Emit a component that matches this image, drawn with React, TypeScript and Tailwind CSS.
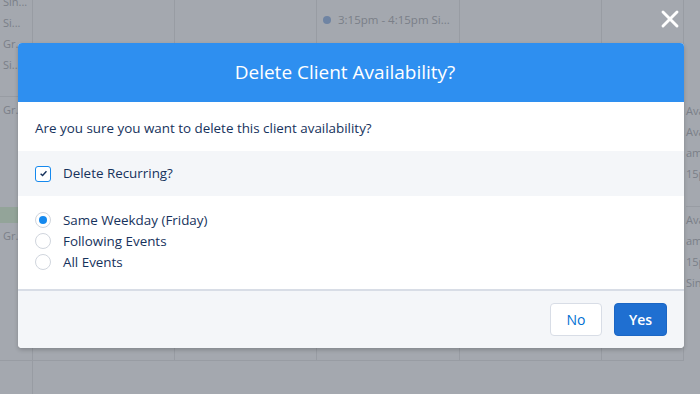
import { X } from "lucide-react";

function CalendarBackdrop() {
  return (
    <div className="flex h-full w-full text-[11px] text-[#7a7f88]">
      {/* first narrow column */}
      <div className="flex w-[33px] flex-col overflow-hidden whitespace-nowrap border-r border-[#989ca3]">
        <div className="flex h-[97px] flex-col gap-[5px] border-b border-[#989ca3] pl-[3px] pt-[2px] leading-[16px]">
          <span className="-mt-[8px]">Sin...</span>
          <span>Si...</span>
          <span>Gr...</span>
          <span>Si...</span>
        </div>
        <div className="flex h-[110px] flex-col pl-[3px] pt-[5px] leading-[16px]">
          <span>Gr...</span>
        </div>
        <div className="h-[16px] bg-[#93a499]" />
        <div className="flex h-[138px] flex-col border-b border-[#989ca3] pl-[3px] pt-[5px] leading-[16px]">
          <span>Gr...</span>
        </div>
      </div>
      <div className="h-[361px] w-[142px] border-r border-b border-[#989ca3]" />
      <div className="h-[361px] w-[142px] border-r border-b border-[#989ca3]" />
      <div className="flex h-[361px] w-[143px] flex-col border-r border-b border-[#989ca3] pl-[6px] pt-[13px]">
        <div className="flex items-center gap-[7px] text-[11.5px] leading-[14px]">
          <span className="h-[8px] w-[8px] rounded-full bg-[#6f84a3]" />
          <span>3:15pm - 4:15pm Si...</span>
        </div>
      </div>
      <div className="h-[361px] w-[142px] border-r border-b border-[#989ca3]" />
      <div className="h-[361px] w-[82px] border-r border-b border-[#989ca3]" />
      <div className="flex w-[16px] flex-col overflow-hidden whitespace-nowrap pl-[2px] leading-[14px]">
        <div className="flex h-[207px] flex-col gap-[7px] border-b border-[#989ca3] pt-[104px]">
          <span>Ava</span>
          <span>Ava</span>
          <span>am</span>
          <span>15p</span>
        </div>
        <div className="flex flex-col gap-[7px] pt-[6px]">
          <span>Ava</span>
          <span>am</span>
          <span>15p</span>
          <span>Sing</span>
        </div>
      </div>
    </div>
  );
}

export default function App() {
  return (
    <div
      className="relative h-[394px] w-[700px] overflow-hidden bg-[#a4a8af]"
      style={{ fontFamily: '"Open Sans", "Liberation Sans", sans-serif' }}
    >
      <CalendarBackdrop />

      <button className="absolute right-[16px] top-[5px] text-white">
        <X className="h-[28px] w-[28px]" strokeWidth={2.5} />
      </button>

      {/* Modal */}
      <div className="absolute left-[18px] top-[43px] w-[666px] overflow-hidden rounded-[4px] bg-white shadow-[0_2px_4px_rgba(0,0,0,0.2)]">
        <div className="flex h-[59px] items-center justify-center bg-[#2e8ff0]">
          <h2 className="-ml-[12px] text-[19px] font-normal text-white">Delete Client Availability?</h2>
        </div>

        <div className="pt-[17px] text-[13.4px] text-[#16325c]">
          <p className="px-[17px] leading-[18px]">
            Are you sure you want to delete this client availability?
          </p>

          <div className="mt-[14px] flex h-[45px] items-center gap-[12px] bg-[#f4f6f9] px-[17px]">
            <span className="flex h-[16px] w-[16px] items-center justify-center rounded-[3px] border border-[#1589ee] bg-white">
              <svg viewBox="0 0 10 10" className="h-[9px] w-[9px]">
                <path d="M1.8 5.2 L4 7.3 L8.3 2.6" fill="none" stroke="#16325c" strokeWidth="1.6" />
              </svg>
            </span>
            <span>Delete Recurring?</span>
          </div>

          <div className="flex flex-col gap-[3px] px-[17px] pb-[18px] pt-[15px]">
            {["Same Weekday (Friday)", "Following Events", "All Events"].map((label, i) => (
              <label key={label} className="flex h-[18px] items-center gap-[12px]">
                <span className="flex h-[16px] w-[16px] items-center justify-center rounded-full border border-[#d0d5dd] bg-white">
                  {i === 0 && <span className="h-[8px] w-[8px] rounded-full bg-[#1589ee]" />}
                </span>
                <span>{label}</span>
              </label>
            ))}
          </div>
        </div>

        <div className="flex h-[59px] items-center justify-end gap-[12px] border-t-2 border-[#d8dde6] bg-[#f4f6f9] px-[17px]">
          <button className="h-[33px] w-[52px] rounded-[4px] border border-[#d8dde6] bg-white text-[14px] text-[#0070d2]">
            No
          </button>
          <button className="h-[33px] w-[53px] rounded-[4px] border border-[#1b66c4] bg-[#1f6fd1] text-[14px] font-semibold text-white">
            Yes
          </button>
        </div>
      </div>
    </div>
  );
}
